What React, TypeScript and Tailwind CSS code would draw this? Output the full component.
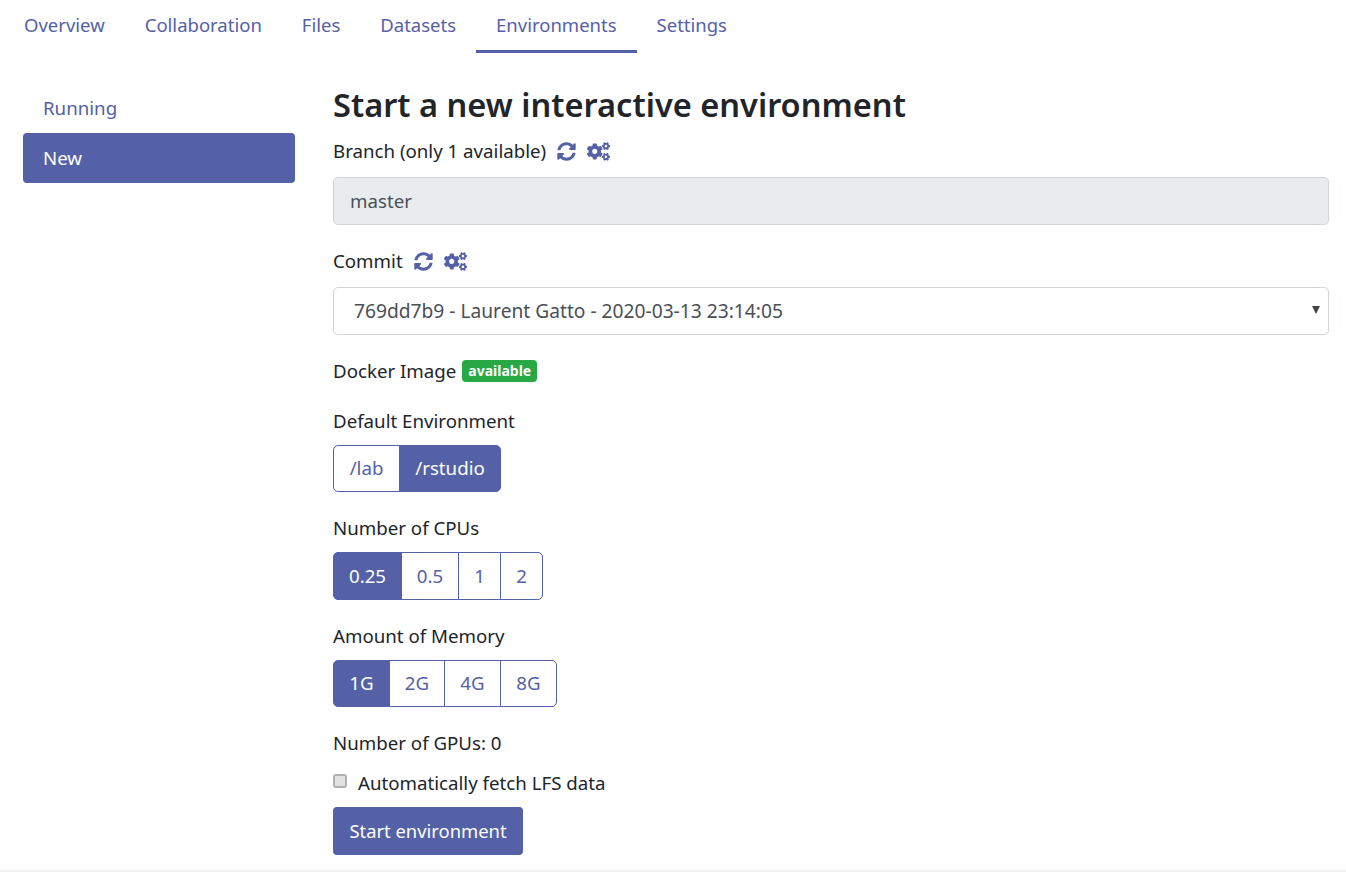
import { FaSyncAlt, FaCogs } from "react-icons/fa";

function Icons() {
  return (
    <span className="ml-[11px] inline-flex items-center gap-[11px] text-[#5561a6]">
      <FaSyncAlt className="h-[19px] w-[19px]" />
      <FaCogs className="h-[19px] w-[23px]" />
    </span>
  );
}

function Group({ items, active }: { items: { label: string; w: number }[]; active: number }) {
  return (
    <div className="flex h-full">
      {items.map((it, i) => (
        <div
          key={it.label}
          style={{ width: it.w }}
          className={
            "flex h-full items-center justify-center border border-[#5561a6] text-[18.7px] " +
            (i === 0 ? "rounded-l-[5px] " : "-ml-px ") +
            (i === items.length - 1 ? "rounded-r-[5px] " : "") +
            (i === active ? "bg-[#5561a6] text-white" : "bg-white text-[#5561a6]")
          }
        >
          {it.label}
        </div>
      ))}
    </div>
  );
}

export default function App() {
  const tabs = ["Overview", "Collaboration", "Files", "Datasets", "Environments", "Settings"];
  return (
    <div className="flex h-[873px] flex-col overflow-hidden bg-white font-['Noto_Sans',sans-serif] text-[18.7px] text-[#212529]">
      <nav className="flex h-[53px] pl-1 text-[18.5px]">
        {tabs.map((t) => (
          <div
            key={t}
            className={
              "flex h-[53px] items-start px-5 pt-[12px] leading-[26px] text-[#5561a6] " +
              (t === "Environments" ? "border-b-[3px] border-[#5561a6]" : "")
            }
          >
            {t}
          </div>
        ))}
      </nav>
      <div className="flex flex-1 pl-[23px] pr-[17px]">
        <aside className="w-[272px] shrink-0 pt-[30px]">
          <div className="flex h-[50px] items-center px-5 pt-px text-[#5561a6]">Running</div>
          <div className="flex h-[50px] items-center rounded-[4px] bg-[#5561a6] px-5 pt-px text-white">New</div>
        </aside>
        <main className="ml-[38px] flex-1">
          <h1 className="mt-[30px] text-[32.6px] font-semibold leading-[44px]">Start a new interactive environment</h1>
          <div className="mt-[11px] flex h-[26px] items-center">Branch (only 1 available)<Icons /></div>
          <div className="mt-[13px] flex h-[48px] items-center rounded-[5px] border border-[#ced4da] bg-[#e9ecef] px-4 text-[#495057]">master</div>
          <div className="mt-[23px] flex h-[26px] items-center">Commit<Icons /></div>
          <div className="relative mt-[13px] flex h-[48px] items-center rounded-[5px] border border-[#ced4da] bg-white pl-5 text-[19.2px] text-[#495057]">
            769dd7b9 - Laurent Gatto - 2020-03-13 23:14:05
            <svg viewBox="0 0 8 8" className="absolute right-[8px] top-[18px] h-[8px] w-[8px]" fill="#444">
              <path d="M0 0h8L4 8z" />
            </svg>
          </div>
          <div className="mt-[23px] flex h-[26px] items-center">
            Docker Image
            <span className="ml-[6px] rounded-[4px] bg-[#28a745] px-[6px] text-[14px] font-bold leading-[22px] text-white">available</span>
          </div>
          <div className="mt-[24px] flex h-[26px] items-center">Default Environment</div>
          <div className="mt-[11px] h-[47px]">
            <Group active={1} items={[{ label: "/lab", w: 67 }, { label: "/rstudio", w: 102 }]} />
          </div>
          <div className="mt-[23px] flex h-[26px] items-center">Number of CPUs</div>
          <div className="mt-[11px] h-[48px]">
            <Group active={0} items={[{ label: "0.25", w: 69 }, { label: "0.5", w: 58 }, { label: "1", w: 43 }, { label: "2", w: 43 }]} />
          </div>
          <div className="mt-[23px] flex h-[26px] items-center">Amount of Memory</div>
          <div className="mt-[11px] h-[47px]">
            <Group active={0} items={[{ label: "1G", w: 57 }, { label: "2G", w: 56 }, { label: "4G", w: 57 }, { label: "8G", w: 57 }]} />
          </div>
          <div className="mt-[23px] flex h-[26px] items-center">Number of GPUs: 0</div>
          <div className="mt-[14px] flex h-[26px] items-center">
            <input type="checkbox" className="mb-[5px] h-[14px] w-[14px] appearance-none rounded-[3px] border-2 border-[#b0b0b0] bg-[#e2e2e2]" />
            <span className="ml-[11px]">Automatically fetch LFS data</span>
          </div>
          <div className="mt-[11px] flex h-[48px] w-[190px] items-center justify-center rounded-[4px] bg-[#5561a6] text-[18.4px] text-white">Start environment</div>
        </main>
      </div>
      <div className="mb-px h-[2px] bg-[#f1f1f1]" />
    </div>
  );
}
